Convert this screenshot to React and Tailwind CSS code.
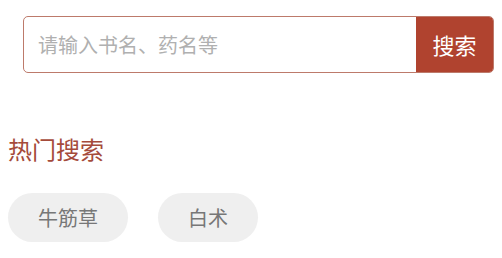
export default function App() {
  const hot = ['牛筋草', '白术'];

  return (
    <div
      className="w-[502px] h-[258px] bg-white pl-[8px] pt-[16px]"
      style={{ fontFamily: '"Noto Sans CJK SC", "Noto Sans", sans-serif' }}
    >
      {/* Search bar */}
      <div className="ml-[15px] w-[471px] h-[57px] flex border border-[#bd7a6b] rounded-[5px] overflow-hidden">
        <div className="flex-1 flex items-center pl-[14px] text-[20px] text-[#b0b0b0]">
          请输入书名、药名等
        </div>
        <button className="w-[77px] h-full bg-[#b0432f] text-white text-[22px] flex items-center justify-center">
          搜索
        </button>
      </div>

      {/* Hot searches */}
      <h3 className="mt-[63px] text-[24px] leading-[26px] text-[#a54b3b]">热门搜索</h3>
      <div className="mt-[31px] flex gap-[30px]">
        {hot.map((item) => (
          <span
            key={item}
            className="h-[49px] px-[30px] rounded-full bg-[#efefef] text-[20px] text-[#777777] flex items-center"
          >
            {item}
          </span>
        ))}
      </div>
    </div>
  );
}
